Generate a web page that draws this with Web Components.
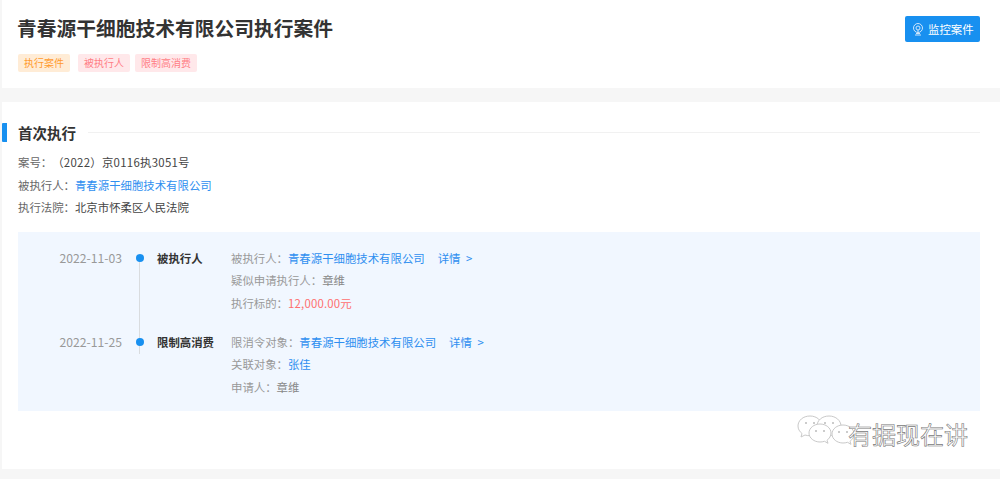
<!DOCTYPE html>
<html lang="zh">
<head>
<meta charset="utf-8">
<title>执行案件</title>
<style>
	html, body { margin: 0; height: 479px; overflow: hidden; }
	body {
		position: relative;
		background: #f6f6f6;
		font-family: "Noto Sans CJK SC", "Liberation Sans", sans-serif;
		font-size: 11.4px;
		color: #333;
		padding-left: 2px;
		box-sizing: border-box;
		text-spacing-trim: space-all;
		font-feature-settings: "chws" 0, "palt" 0;
	}
</style>
</head>
<body>
<page-header>
	<span slot="title">青春源干细胞技术有限公司执行案件</span>
	<case-tag slot="tags" kind="orange">执行案件</case-tag>
	<case-tag slot="tags" kind="red">被执行人</case-tag>
	<case-tag slot="tags" kind="red">限制高消费</case-tag>
	<monitor-button slot="action">监控案件</monitor-button>
</page-header>

<case-section heading="首次执行">
	<info-row label="案号："><span style="letter-spacing:.28px">（2022）京0116执3051号</span></info-row>
	<info-row label="被执行人："><a-link>青春源干细胞技术有限公司</a-link></info-row>
	<info-row label="执行法院：">北京市怀柔区人民法院</info-row>
	<case-timeline slot="panel">
		<timeline-item date="2022-11-03" kind="被执行人">
			<info-row muted label="被执行人："><a-link>青春源干细胞技术有限公司</a-link><a-link detail>详情 &gt;</a-link></info-row>
			<info-row muted label="疑似申请执行人：">章维</info-row>
			<info-row muted label="执行标的："><span style="color:#ff6f6f;letter-spacing:.2px">12,000.00元</span></info-row>
		</timeline-item>
		<timeline-item date="2022-11-25" kind="限制高消费" last>
			<info-row muted label="限消令对象："><a-link>青春源干细胞技术有限公司</a-link><a-link detail>详情 &gt;</a-link></info-row>
			<info-row muted label="关联对象："><a-link>张佳</a-link></info-row>
			<info-row muted label="申请人：">章维</info-row>
		</timeline-item>
	</case-timeline>
</case-section>

<wechat-mark>有据现在讲</wechat-mark>

<script>
function shadow (el, html) {
	el.attachShadow({ mode: "open" }).innerHTML = html.trim();
}

class PageHeader extends HTMLElement {
	constructor () {
		super();
		shadow(this, `
			<style>
				:host { display: flex; justify-content: space-between; height: 88px; box-sizing: border-box; padding: 15px 20px 0 16px; background: #fff; }
				h1 { margin: 0 0 0 -1px; font-size: 19.75px; line-height: 26px; font-weight: 700; color: #333; }
				.tags { display: flex; gap: 5px; margin-top: 13px; }
				.act { padding-top: 1px; }
			</style>
			<div>
				<h1><slot name="title"></slot></h1>
				<div class="tags"><slot name="tags"></slot></div>
			</div>
			<div class="act"><slot name="action"></slot></div>
		`);
	}
}

class CaseTag extends HTMLElement {
	constructor () {
		super();
		shadow(this, `
			<style>
				:host { display: block; height: 18px; line-height: 18px; padding: 0 6px; margin-right: 3px; font-size: 10px; border-radius: 2px; }
				:host([kind="orange"]) { background: #ffecd6; color: #ff9a2e; }
				:host([kind="red"]) { background: #ffe8ea; color: #ff7d85; margin-right: 0; }
			</style>
			<slot></slot>
		`);
	}
}

class MonitorButton extends HTMLElement {
	constructor () {
		super();
		shadow(this, `
			<style>
				:host { display: flex; align-items: center; gap: 4px; box-sizing: border-box; width: 75px; height: 26px; padding-left: 7px; background: #1890f0; color: #fff; font-size: 11.4px; border-radius: 2px; }
				svg { width: 12px; height: 13px; }
			</style>
			<svg viewBox="0 0 12 13" fill="none" stroke="#cfe6fb" stroke-width="1">
				<circle cx="6" cy="5" r="4.5"/>
				<circle cx="6" cy="5" r="2"/>
				<path d="M6 7v3M3 12h6M4 10.5h4"/>
			</svg>
			<slot></slot>
		`);
	}
}

class CaseSection extends HTMLElement {
	constructor () {
		super();
		shadow(this, `
			<style>
				:host { display: block; height: 367px; box-sizing: border-box; margin-top: 14px; padding: 21px 20px 0 16px; background: #fff; position: relative; }
				.head { display: flex; align-items: center; height: 19px; margin-bottom: 9px; }
				.head::before { content: ""; width: 5px; height: 19px; background: #1890f0; margin-left: -16px; margin-right: 11px; border-radius: 1px 0 0 1px; }
				h2 { margin: 0 12px 0 0; font-size: 14.5px; font-weight: 700; color: #333; line-height: 19px; }
				.rule { flex: 1; height: 1px; background: #f1f1f1; margin-top: -1px; }
				.panel { margin-top: 13px; }
			</style>
			<div class="head"><h2></h2><div class="rule"></div></div>
			<slot></slot>
			<div class="panel"><slot name="panel"></slot></div>
		`);
		this.shadowRoot.querySelector("h2").textContent = this.getAttribute("heading");
	}
}

class InfoRow extends HTMLElement {
	constructor () {
		super();
		shadow(this, `
			<style>
				:host { display: block; height: 22.5px; line-height: 22.5px; font-size: 11.4px; color: #444; white-space: nowrap; }
				.label { color: #666; }
				:host([muted]) { color: #888; }
				:host([muted]) .label { color: #999; }
			</style><span class="label"></span><slot></slot>
		`);
		this.shadowRoot.querySelector(".label").textContent = this.getAttribute("label");
	}
}

class ALink extends HTMLElement {
	constructor () {
		super();
		shadow(this, `
			<style>
				:host { color: #2f8ff0; }
				:host([detail]) { margin-left: 13px; word-spacing: 3px; }
			</style><slot></slot>
		`);
	}
}

class CaseTimeline extends HTMLElement {
	constructor () {
		super();
		shadow(this, `
			<style>
				:host { display: flex; flex-direction: column; gap: 16.5px; box-sizing: border-box; height: 179px; padding-top: 15px; background: #f1f7ff; }
			</style>
			<slot></slot>
		`);
	}
}

class TimelineItem extends HTMLElement {
	constructor () {
		super();
		shadow(this, `
			<style>
				:host { display: grid; grid-template-columns: 104px 35px 74px 1fr; line-height: 22.5px; }
				.date { text-align: right; font-size: 12.2px; color: #999; }
				.axis { position: relative; }
				.axis::before { content: ""; position: absolute; left: 17px; top: 11px; width: 1px; height: 96px; background: #d9dcdf; }
				.axis::after { content: ""; position: absolute; left: 13.5px; top: 7.5px; width: 8px; height: 8px; border-radius: 50%; background: #1890f0; }
				:host([last]) .axis::before { height: 12px; }
				.kind { font-size: 11.4px; font-weight: 700; color: #333; }
			</style>
			<div class="date"></div>
			<div class="axis"></div>
			<div class="kind"></div>
			<div><slot></slot></div>
		`);
		this.shadowRoot.querySelector(".date").textContent = this.getAttribute("date");
		this.shadowRoot.querySelector(".kind").textContent = this.getAttribute("kind");
	}
}

class WechatMark extends HTMLElement {
	constructor () {
		super();
		shadow(this, `
			<style>
				:host { position: absolute; left: 796px; top: 415px; display: flex; align-items: center; }
				svg { width: 66px; height: 38px; margin-right: -14px; }
				span { font-size: 24px; line-height: 38px; color: #fff; -webkit-text-stroke: .6px #777; font-weight: 400; }
			</style>
			<svg viewBox="0 0 66 38" fill="#fff" stroke="#c9c9c9" stroke-width="1">
				<path d="M14 1c-7 0-12 4.500-12 10 0 3 1.500 5.500 4 7.500l-1 3.500 4-2c1.500.5 3 .7 5 .7 7 0 12-4.500 12-9.700S21 1 14 1z"/>
				<path d="M33 1c-7 0-12 4.500-12 10 0 3 1.500 5.500 4 7.500l-1 3.500 4-2c1.500.5 3 .7 5 .7 7 0 12-4.500 12-9.700S40 1 33 1z"/>
				<path d="M24 9c-6 0-11 4-11 9 0 5 5 9 11 9 1.500 0 3-.2 4.500-.7l3.500 2-1-3c2.500-1.800 4-4.500 4-7.300 0-5-5-9-11-9z"/>
				<path d="M47 10c-6 0-11 4-11 9 0 5 5 9 11 9 1.500 0 3-.2 4.500-.7l3.500 2-1-3c2.500-1.800 4-4.500 4-7.300 0-5-5-9-11-9z"/>
				<g fill="#bbb" stroke="none">
					<circle cx="10" cy="8" r="1"/><circle cx="18" cy="8" r="1"/>
					<circle cx="29" cy="8" r="1"/><circle cx="37" cy="8" r="1"/>
					<circle cx="20" cy="16" r="1"/><circle cx="28" cy="16" r="1"/>
					<circle cx="43" cy="17" r="1"/><circle cx="51" cy="17" r="1"/>
				</g>
			</svg>
			<span><slot></slot></span>
		`);
	}
}

customElements.define("page-header", PageHeader);
customElements.define("case-tag", CaseTag);
customElements.define("monitor-button", MonitorButton);
customElements.define("case-section", CaseSection);
customElements.define("info-row", InfoRow);
customElements.define("a-link", ALink);
customElements.define("case-timeline", CaseTimeline);
customElements.define("timeline-item", TimelineItem);
customElements.define("wechat-mark", WechatMark);
</script>
</body>
</html>
